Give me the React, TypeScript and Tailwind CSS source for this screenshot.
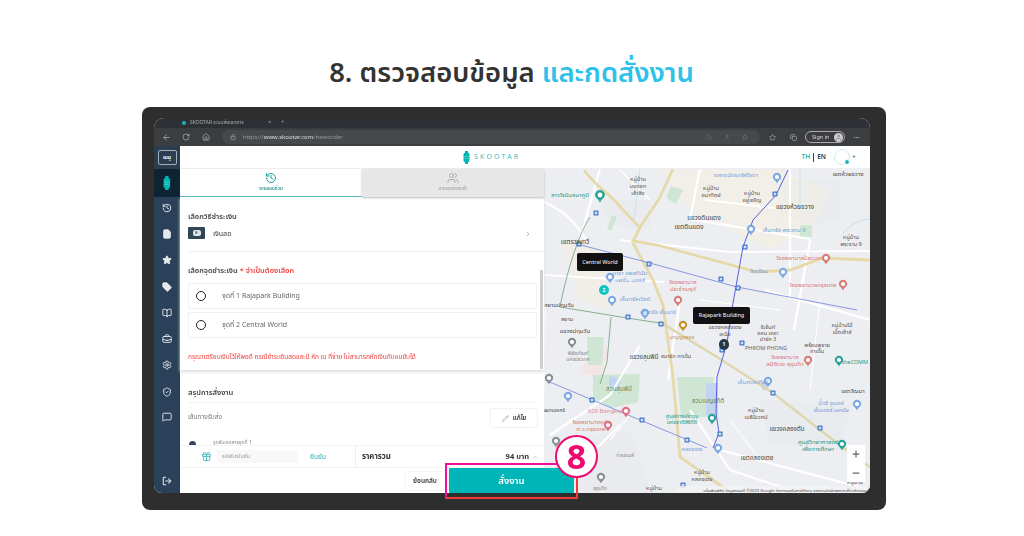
import React from "react";
import { ArrowLeft, RotateCw, Home, Lock, Star, Tag, BriefcaseBusiness, Settings, ShieldCheck, MessageSquare, LogOut, History, FileText, ChevronRight, Pencil, Gift, ChevronUp, Plus, Minus, Copy, MoreHorizontal, Search, BookOpen, User, Users } from "lucide-react";

const Logo = ({ c = "#00b5b5", s = 1 }: { c?: string; s?: number }) => (
  <svg width={7 * s} height={13 * s} viewBox="0 0 7 13">
    <path d="M2 0h3v1.500l1.500 1.500v7l-1.500 1.500v1.500h-3v-1.500l-1.500-1.500v-7l1.500-1.500z" fill={c} />
    <path d="M1 5.500h5M1 7.500h5" stroke="#fff" strokeWidth=".4" opacity=".6" />
  </svg>
);

type L = [number, number, string, string?, number?];
const labels: L[] = [
  [638, 181, "หมู่บ้าน"], [638, 188, "บงกอก"], [638, 195, "เล้าสิ่ง"],
  [711, 190, "หมู่บ้าน"], [711, 197, "อนาทิตย์"], [752, 195, "หมู่บ้าน"], [752, 202, "อยู่เจริญ"],
  [795, 209, "แขวงห้วยขวาง", "#444", 6.6], [704, 220, "แขวงดินแดง", "#444", 6.6], [689, 229, "เขตดินแดง", "#444", 6.6],
  [848, 176, "เขตห้วยขวาง", "#444", 6], [851, 239, "หมู่บ้าน"], [851, 246, "พระราม 9"],
  [575, 244, "เขตราชเทวี", "#444", 6.6], [570, 197, "สาวโรบินสมาคูมิ", "#1a9a8a", 6], [736, 177, "ตลาดนัดรถไฟโชดา", "#7a9ed6", 6],
  [784, 232, "เซ็นทรัล พระราม 9", "#7a9ed6", 6], [799, 260, "โรงพยาบาลปิยะเวท", "#d67a7a", 6], [759, 273, "โรงเรียน", "#7a9ed6", 5.5],
  [813, 287, "โรงพยาบาลกรุงเทพ", "#d67a7a", 6], [683, 284, "โรงพยาบาล", "#d67a7a", 6], [683, 291, "ประจำเมรุก์", "#d67a7a", 6],
  [630, 275, "เทรา แพลทินัม", "#7a9ed6", 6], [630, 282, "แฟชั่น มอลล์", "#7a9ed6", 6], [635, 301, "เซ็นทรัลเวิลด์", "#7a9ed6", 6],
  [559, 307, "สยามปทุมวัน", "#444", 5.8], [567, 321, "สยาม"], [575, 333, "แขวงปทุมวัน", "#444", 6],
  [578, 355, "พิพิธภัณฑ์", "#888", 5], [578, 361, "แห่งประเทศ", "#888", 5], [644, 359, "แขวงลุมพินี", "#444", 6.2], [676, 358, "สมาร์ท กาเด้น"],
  [619, 391, "สวนลุมพินี", "#5f8a5f", 6.2], [708, 403, "สวนเบญจกิติ", "#5f8a5f", 6.2], [658, 314, "เซ็นทรัล เอ็มบาร์", "#7a9ed6", 5.6],
  [682, 339, "มาบุญครอง", "#c68f4a", 5.2], [725, 329, "แขวงคลองเตย"], [725, 336, "เหนือ"], [768, 329, "ริเอ้นท์"], [768, 335, "ออน เดอะ"], [768, 341, "ปาร์ค 3"],
  [842, 327, "หมู่บ้านไม้"], [842, 334, "เบ็ตเฮ้าส์"], [817, 347, "พร้อมพูราย"], [817, 353, "กาเด้น"], [766, 350, "PHROM PHONG", "#666", 5.6],
  [785, 359, "โรงพยาบาล", "#d67a7a", 6], [785, 366, "สมิติเวช สุขุมวิท", "#d67a7a", 6], [855, 364, "theCOMM", "#1a9a8a", 5.5], [753, 384, "เอ็มควอเทียร์", "#7a9ed6", 6],
  [756, 412, "หมู่บ้าน"], [756, 419, "เมธีนิเวศน์"], [787, 431, "แขวงคลองตัน", "#444", 6.2], [853, 393, "เขตวัฒนา", "#444", 6],
  [831, 405, "บิ๊กซี ซูเปอร์", "#7a9ed6", 5.6], [831, 412, "เซ็นเตอร์ เอกมัย", "#7a9ed6", 5.6], [818, 444, "ศูนย์วิทยาศาสตร์", "#1a9a8a", 6], [818, 451, "เพื่อการศึกษา", "#1a9a8a", 6],
  [682, 418, "ศูนย์การประชุม", "#1a9a8a", 5.5], [682, 424, "แห่งชาติสิริกิติ์", "#1a9a8a", 5.5], [692, 451, "คลองเตย", "#7a9ed6", 5.5], [757, 460, "เขตคลองเตย", "#444", 6.2],
  [702, 474, "หมู่บ้าน"], [702, 481, "คลองเตย"], [654, 490, "หมู่บ้าน"], [855, 484, "หมู่บ้าน"], [625, 457, "ท่ารถเมล์", "#888", 5], [606, 413, "SOI Bangkok", "#e28a96", 6],
  [591, 424, "โรงพยาบาลจุฬา", "#d67a7a", 6], [591, 431, "ศ.ว.กรุงเทพ", "#d67a7a", 6], [554, 412, "แยกมเหศร์", "#444", 5], [600, 490, "สุขุมวิท", "#888", 5],
];

const Pin = ({ x, y, c, r = 3.2 }: { x: number; y: number; c: string; r?: number }) => (
  <g>
    <path d={`M${x} ${y + r * 2.2}C${x - r * .4} ${y + r * 1.1} ${x - r * 1.4} ${y + r * .8} ${x - r * 1.4} ${y}a${r * 1.4} ${r * 1.4} 0 1 1 ${r * 2.8} 0C${x + r * 1.4} ${y + r * .8} ${x + r * .4} ${y + r * 1.1} ${x} ${y + r * 2.2}z`} fill={c} />
    <circle cx={x} cy={y} r={r * .7} fill="#fff" />
  </g>
);
const Sta = ({ x, y }: { x: number; y: number }) => (
  <g>
    <rect x={x - 2.500} y={y - 2.500} width="5" height="5" rx=".8" fill="#3f74c8" />
    <rect x={x - 1.300} y={y - 1.300} width="2.600" height="2.600" fill="#cfe0f7" />
  </g>
);

const MapSvg = () => (
  <svg className="w-full h-full block" viewBox="544 169 326 324" style={{ fontFamily: "'Noto Sans','Noto Sans Thai',sans-serif" }}>
    <rect x="544" y="169" width="326" height="324" fill="#eceef1" />
    <g fill="#e9ebee">
      <path d="M780 180h60v40l-30 6-30-10z" />
      <path d="M600 200h50v30l-40-6z" />
      <path d="M760 400l90 6-10 44-70-6z" />
      <path d="M560 440l70-10 20 60h-80z" />
    </g>
    <path d="M560 240l20 60 30 10-10-60z" fill="#f4ece3" opacity=".7" />
    <path d="M579 374l16-30 14 4-8 28z" fill="#f6e2e2" opacity=".8" />
    <path d="M660 170l30 40 80 40 40-20 20-40-50-20z" fill="#f5efdf" opacity=".5" />
    <path d="M671 186l12 4-7 14-10-6z M612 215l5 2-6 14-4-2z M587 337h17l-2 28h-14z M593 375l47-1-2 28-27 6-18-10z M677 377h36l4 40h-36z M800 225h12v12h-12z" fill="#cfe6d5" />
    <path d="M706 383h12v32h-12z M609 376l12 3-2 12-10-4z M760 385l8-8 4 4-8 10z" fill="#c2d4ef" />
    <path d="M541 200c15 8 30 14 45 40M600 169l-20 70M544 275l120 7M620 240l110 12 140-1M700 169l-10 50 120 20M790 169v130M810 240l-16 90M680 300l-12 80M640 345l-30 50-60 40M545 305l-2 90M690 410l40 60 60 20M720 450l150 40M620 425l-60 60M765 290l105 30M705 200l70 8" stroke="#fff" strokeWidth="2.200" fill="none" />
    <path d="M610 440l20-25M760 460l-30-40M700 300l80 10M820 300l-10 90M620 170l30 30" stroke="#fff" strokeWidth="1.200" fill="none" />
    <g fill="none" stroke="#e6d9a9" strokeWidth="2.800">
      <path d="M584 170c10 14 20 20 30 30l26 28-7 13 24 4 56 15 44 12 33-2 33-12 47 2" />
      <path d="M673 169l-14 30-19 28" />
      <path d="M633 243l20 37 10 25 10 72 7 80 47 33" />
    </g>
    <path d="M660 322l57 35 56 36 60 47 37 27" stroke="#ddd6ae" strokeWidth="2.400" fill="none" />
    <path d="M590 217c-12 18-24 58-30 90M560 307l67 11 33 5M611 317l-4 45-7 22" stroke="#6f9e7a" strokeWidth=".8" fill="none" />
    <path d="M788 170l-12 25-23 25-10 27-10 56-6 40-10 34-1 36 3 20-6 15" stroke="#5a5fe0" strokeWidth="1" fill="none" />
    <path d="M573 243l77 20 87 24 120 23M545 380l95 40 67 28" stroke="#5c72d8" strokeWidth=".7" fill="none" />
    <path d="M640 169l-6 50M843 234c5-10 20-15 27-15M800 170v40" stroke="#c9dff0" strokeWidth="1" fill="none" />
    <g>
      {[[596,213],[579,244],[649,264],[721,279],[738,288],[745,247],[775,194],[628,317],[661,324],[722,350],[742,343],[592,400],[642,420],[687,440],[720,434],[773,393],[820,428],[683,485]].map(([x,y],i)=><Sta key={i} x={x} y={y} />)}
    </g>
    <Pin x={600} y={195} c="#2ba39a" r={3.500} />
    <Pin x={777} y={177} c="#7ea9e2" r={3} /><Pin x={751} y={229} c="#7ea9e2" r={3} /><Pin x={783} y={272} c="#7ea9e2" r={3} />
    <Pin x={826} y={258} c="#d97c7c" r={3} /><Pin x={843} y={284} c="#d97c7c" r={3} /><Pin x={678} y={300} c="#d97c7c" r={3} />
    <Pin x={610} y={277} c="#7ea9e2" r={3} /><Pin x={612} y={300} c="#7ea9e2" r={3} /><Pin x={645} y={313} c="#7ea9e2" r={3} />
    <Pin x={683} y={325} c="#c68f2c" r={3} /><Pin x={572} y={342} c="#8a9196" r={3} /><Pin x={549} y={378} c="#8a9196" r={3} />
    <Pin x={568} y={396} c="#7ea9e2" r={3} /><Pin x={626} y={411} c="#e0708a" r={3} /><Pin x={608} y={425} c="#e0708a" r={3} />
    <Pin x={556} y={441} c="#8a9196" r={3} /><Pin x={601} y={477} c="#8a9196" r={3} /><Pin x={768} y={381} c="#7ea9e2" r={3} />
    <Pin x={712} y={418} c="#2ba39a" r={3} /><Pin x={718} y={448} c="#7ea9e2" r={3} /><Pin x={857} y={404} c="#7ea9e2" r={3} />
    <Pin x={808} y={360} c="#d97c7c" r={3} /><Pin x={839} y={360} c="#2ba39a" r={3} /><Pin x={842} y={444} c="#2ba39a" r={3} />
    <g textAnchor="middle">
      {labels.map(([x, y, t, c, s], i) => (
        <text key={i} x={x} y={y} fill={c ?? "#555"} fontSize={s ?? 5.600}>{t}</text>
      ))}
    </g>
    <rect x="676" y="486" width="194" height="7" fill="#f2f3f4" opacity=".8" />
    <text x="869" y="491.500" textAnchor="end" fontSize="4.200" fill="#444">แป้นพิมพ์ลัด ข้อมูลแผนที่ ©2023 Google ข้อกำหนดในการใช้งาน รายงานข้อผิดพลาดเกี่ยวกับแผนที่</text>
  </svg>
);

const sideIcons: [React.ElementType, string][] = [
  [History, "mt-[6px]"], [FileText, "mt-[16px]"], [Star, "mt-[16px]"], [Tag, "mt-[17px]"], [BookOpen, "mt-[16px]"],
  [BriefcaseBusiness, "mt-[16px]"], [Settings, "mt-[16px]"], [ShieldCheck, "mt-[17px]"], [MessageSquare, "mt-[15px]"],
];

export default function App() {
  return (
    <div className="relative w-[1024px] h-[536px] bg-white overflow-hidden flex flex-col items-center" style={{ fontFamily: "'Noto Sans','Noto Sans Thai','Liberation Sans',sans-serif" }}>
      <h1 className="mt-[51px] h-[42px] leading-[42px] text-[27.400px] font-semibold text-[#333] whitespace-nowrap -ml-[1px]">
        8. ตรวจสอบข้อมูล <span className="text-[#2ec1ea]">และกดสั่งงาน</span>
      </h1>
      <div className="mt-[14px] ml-[4px] w-[744px] h-[403px] rounded-[8px] bg-[#2e2e2e] pt-[11px] pl-[12px]">
        <div className="w-[716px] h-[375px] rounded-t-[10px] rounded-b-[8px] overflow-hidden flex flex-col bg-white blur-[0.35px]">
          {/* tab strip */}
          <div className="h-[10px] bg-[#2d3135] flex items-start pl-[20px] shrink-0">
            <div className="w-[110px] h-[10px] flex items-center gap-[4px] pl-[8px] text-[5px] text-[#aaa]">
              <span className="w-[4px] h-[4px] rounded-full bg-[#19b5b5]" />
              <span className="truncate w-[76px]">SKOOTAR ระบบส่งเอกสาร</span>
              <span>×</span>
              <span className="ml-[6px]">+</span>
            </div>
          </div>
          {/* toolbar */}
          <div className="h-[18px] bg-[#3b3d40] flex items-center pl-[8px] pr-[8px] shrink-0 text-[#b5b5b5]">
            <ArrowLeft size={9} />
            <RotateCw size={8} className="ml-[11px]" />
            <Home size={8} className="ml-[12px]" />
            <div className="ml-[12px] w-[538px] h-[14px] rounded-[7px] bg-[#46484b] flex items-center pl-[8px] pr-[12px] text-[6px]">
              <Lock size={6} />
              <span className="ml-[7px] text-[#999]">https://<span className="text-[#ddd]">www.skootar.com</span>/neworder</span>
              <Search size={6} className="ml-auto text-[#777]" />
              <User size={6} className="ml-[12px] text-[#777]" />
              <Star size={6} className="ml-[12px] text-[#888]" />
            </div>
            <Star size={7} className="ml-[9px]" />
            <Copy size={7} className="ml-[14px]" />
            <div className="ml-[8px] h-[12px] w-[40px] rounded-[6px] border border-[#aaa] flex items-center justify-between pl-[6px] pr-[1px] text-[5.500px] text-[#ddd] shrink-0">
              Sign in
              <span className="w-[9px] h-[9px] rounded-full bg-[#cfcfcf] flex items-center justify-center"><User size={7} className="text-[#777]" /></span>
            </div>
            <MoreHorizontal size={7} className="ml-[8px]" />
          </div>
          {/* app */}
          <div className="flex-1 flex min-h-0">
            <aside className="w-[26px] bg-[#2a4159] flex flex-col items-center text-[#e4e8ec] shrink-0">
              <div className="h-[23px] w-full bg-[#2b3d4f] flex items-center justify-center">
                <div className="w-[19px] h-[15px] rounded-[2px] border border-[#9fb0bf] flex items-center justify-center text-[5px] font-bold text-[#fff]">เมนู</div>
              </div>
              <div className="h-[28px] w-full bg-[#0e2433] flex items-center justify-center"><Logo s={1.1} /></div>
              {sideIcons.map(([I, m], i) => <I key={i} size={10} className={m} strokeWidth={2.200} fill={i === 1 || i === 2 || i === 3 ? "#e4e8ec" : "none"} />)}
              <LogOut size={10} className="mt-auto mb-[7px]" strokeWidth={2.500} />
            </aside>
            <main className="flex-1 flex flex-col min-w-0">
              <header className="h-[23px] bg-white flex items-center relative shrink-0 border-b border-[#eee]">
                <div className="flex items-center gap-[4px] ml-[283px]">
                  <Logo />
                  <span className="text-[7px] tracking-[2.200px] text-[#3dbcc0]">SKOOTAR</span>
                </div>
                <div className="ml-auto flex items-center text-[6.500px] mr-[14px]">
                  <span className="text-[#19b5b5] font-semibold">TH</span>
                  <span className="w-px h-[9px] bg-[#444] mx-[3px]" />
                  <span className="text-[#333] font-semibold">EN</span>
                  <span className="relative ml-[8px] w-[16px] h-[16px] rounded-full border border-[#cfe9ea]">
                    <span className="absolute right-[-1px] bottom-[-1px] w-[6px] h-[6px] rounded-full bg-[#19b5b5] border border-white" />
                  </span>
                  <span className="ml-[2px] text-[#555] text-[4px]">▼</span>
                </div>
              </header>
              <div className="flex-1 flex min-h-0">
                <section className="w-[364px] flex flex-col shrink-0 relative z-10 bg-white">
                  <div className="h-[28px] flex shrink-0">
                    <div className="w-[182px] border-b-[1.500px] border-[#4db6b6] flex flex-col items-center pt-[3px]">
                      <History size={12} className="text-[#19a5a8]" />
                      <span className="text-[4.500px] font-semibold text-[#2a8f92] mt-[1px]">งานแบบด่วน</span>
                    </div>
                    <div className="w-[182px] bg-[#e7e7e7] shadow-[0_1px_2px_#bbb] flex flex-col items-center pt-[3px]">
                      <Users size={12} className="text-[#aaa]" />
                      <span className="text-[4.500px] text-[#999] mt-[1px]">งานจองล่วงหน้า</span>
                    </div>
                  </div>
                  <div className="h-[173px] shrink-0 pl-[8px] pr-[7px] shadow-[0_2px_3px_#ddd] overflow-hidden">
                    <p className="mt-[14px] h-[11px] leading-[11px] text-[7.500px] font-semibold text-[#444]">เลือกวิธีชำระเงิน</p>
                    <div className="mt-[5px] h-[25px] flex items-start border-b border-[#f0f0f0] -mr-[7px] pr-[12px]">
                      <span className="w-[17px] h-[12px] bg-[#2f4656] flex items-center justify-center rounded-[1px]">
                        <span className="w-[8px] h-[6px] bg-[#dfe6ea] rounded-[2px] text-[4px] leading-[6px] text-center font-bold text-[#2f4656]">฿</span>
                      </span>
                      <span className="ml-[8px] text-[7px] leading-[13px] text-[#555] font-medium">เงินสด</span>
                      <ChevronRight size={8} className="ml-auto mt-[3px] text-[#999]" />
                    </div>
                    <p className="mt-[13px] h-[11px] leading-[11px] text-[7.500px] font-semibold text-[#444]">เลือกจุดชำระเงิน <span className="text-[#f0413f]">* จำเป็นต้องเลือก</span></p>
                    {["จุดที่ 1 Rajapark Building", "จุดที่ 2 Central World"].map((t, i) => (
                      <div key={t} className={`${i ? "mt-[3px]" : "mt-[7px]"} h-[26px] border border-[#f0f0f0] flex items-center pl-[7px] rounded-[1px]`}>
                        <span className="w-[10px] h-[10px] rounded-full border-[1.500px] border-[#222]" />
                        <span className="ml-[16px] text-[7px] text-[#666]">{t}</span>
                      </div>
                    ))}
                    <p className="mt-[14px] text-[6.500px] leading-[9px] text-[#f0413f] whitespace-nowrap">กรุณาเตรียมเงินไว้ให้พอดี กรณีชำระเงินสดและมี หัก ณ ที่จ่าย ไม่สามารถหักเงินกับคนขับได้</p>
                  </div>
                  <div className="absolute right-[1px] top-[101px] w-[3px] h-[99px] bg-[#cfcfcf]" />
                  <div className="pl-[8px] pr-[7px]">
                    <p className="mt-[17px] h-[11px] leading-[11px] text-[7.500px] font-semibold text-[#444]">สรุปการสั่งงาน</p>
                    <div className="mt-[4px] pt-[6px] border-t border-[#f3f3f3] flex items-start justify-between h-[37px]">
                      <span className="text-[6.500px] leading-[15px] text-[#777]">เส้นทางรับส่ง</span>
                      <span className="w-[46px] h-[18px] rounded-[1px] bg-white shadow-[0_0_2px_#ccc] flex items-center justify-center gap-[4px] text-[6.500px] font-semibold text-[#333]">
                        <Pencil size={7} className="text-[#999]" />แก้ไข
                      </span>
                    </div>
                    <div className="h-[6px] flex items-start pl-[1px] overflow-hidden">
                      <span className="w-[7px] h-[7px] rounded-full bg-[#33475a] mt-[2px]" />
                      <span className="ml-[17px] text-[5px] leading-[6px] text-[#888]">จุดรับเอกสารจุดที่ 1</span>
                    </div>
                  </div>
                  <div className="h-[23px] flex items-center border-t border-b border-[#f3f3f3] shrink-0">
                    <Gift size={11} className="ml-[21px] text-[#4cbcc0]" />
                    <span className="ml-[5px] w-[81px] h-[13px] bg-[#f8f8f8] pl-[5px] text-[5.500px] leading-[13px] text-[#999]">รหัสโปรโมชั่น</span>
                    <span className="ml-[12px] text-[6.500px] font-medium text-[#4cb4bb]">ยืนยัน</span>
                    <span className="ml-[29px] w-px h-[23px] bg-[#eee]" />
                    <span className="ml-[6px] text-[7.800px] font-bold text-[#333]">ราคารวม</span>
                    <span className="ml-auto text-[7.500px] font-bold text-[#333]">94 บาท</span>
                    <ChevronUp size={6} className="ml-[3px] mr-[6px] text-[#999]" />
                  </div>
                  <div className="h-[25px] flex items-center pl-[226px] shrink-0">
                    <span className="w-[38px] h-[18px] rounded-[1px] shadow-[0_0_2px_#ddd] text-center text-[6.500px] leading-[18px] font-semibold text-[#333] shrink-0">ย้อนกลับ</span>
                    <span className="ml-[5px] w-[125px] h-[25px] rounded-[1px] bg-[#00b5b7] text-center text-[9.500px] leading-[25px] font-semibold text-white shrink-0">สั่งงาน</span>
                  </div>
                </section>
                <section className="flex-1 relative min-w-0">
                  <MapSvg />
                  <div className="absolute left-[33px] top-[84px] w-[46px] h-[18px] rounded-[2px] bg-[#111] text-white text-[5.500px] leading-[18px] text-center">Central World</div>
                  <div className="absolute left-[149px] top-[138px] w-[57px] h-[17px] rounded-[2px] bg-[#111] text-white text-[5.500px] leading-[17px] text-center">Rajapark Building</div>
                  <div className="absolute left-[55px] top-[116px] w-[10px] h-[10px] rounded-full bg-[#12c4bd] text-white text-[5px] leading-[10px] text-center font-bold">2</div>
                  <div className="absolute left-[175px] top-[170px] w-[10px] h-[11px] rounded-full bg-[#24384a] text-white text-[5px] leading-[11px] text-center font-bold">1</div>
                  <div className="absolute left-[303px] top-[276px] w-[18px] h-[37px] bg-white flex flex-col items-center justify-around text-[#666]">
                    <Plus size={10} strokeWidth={3} />
                    <Minus size={10} strokeWidth={3} />
                  </div>
                </section>
              </div>
            </main>
          </div>
        </div>
      </div>
      {/* callout over the submit button */}
      <div className="absolute left-[445px] top-[463px] w-[133px] h-[36px] border-[2.500px] border-[#f0109c] border-b-[#f03a3a] border-r-[#f03a3a] pointer-events-none" />
      <div className="absolute left-[555px] top-[435px] w-[43px] h-[43px] rounded-full bg-white border-[2.500px] border-[#ee0a6e] flex items-center justify-center text-[34px] font-bold text-[#ee0a6e]">8</div>
    </div>
  );
}
